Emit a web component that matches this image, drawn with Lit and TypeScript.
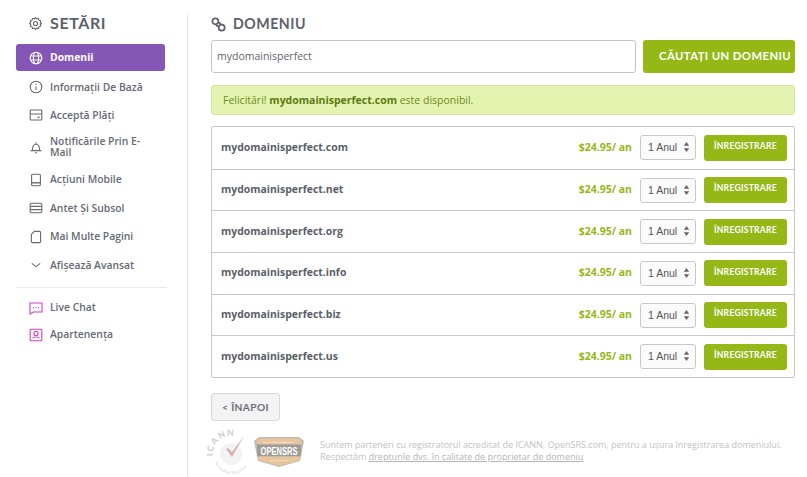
import { LitElement, html, css, svg } from "lit";
import { customElement } from "lit/decorators.js";

const ic = (body: unknown, cls = "") => html`<svg class="ic ${cls}" viewBox="0 0 14 14" width="14" height="14" fill="none" stroke="currentColor" stroke-width="1.1">${body}</svg>`;

const icons = {
  globe: svg`<circle cx="7" cy="7" r="5.8"/><ellipse cx="7" cy="7" rx="2.6" ry="5.8"/><path d="M1.4 5h11.2M1.4 9h11.2"/>`,
  info: svg`<circle cx="7" cy="7" r="5.8"/><path d="M7 6.2v4M7 3.8v1.2"/>`,
  card: svg`<rect x="1.2" y="2" width="11.6" height="10" rx=".8"/><path d="M1.2 6h11.6M8.6 9.4h2"/>`,
  bell: svg`<path d="M1.6 10.6h10.8M3.4 10.6c0-4.6.8-6.4 3.6-6.4s3.6 1.8 3.6 6.4M7 2.400v1.800M6 12.800h2"/>`,
  mobile: svg`<rect x="2.6" y="1.2" width="8.8" height="11.6" rx="1.2"/><path d="M2.6 9.8h8.8" stroke-width="1.4"/>`,
  header: svg`<rect x="1.2" y="2.2" width="11.6" height="9.6" rx="1.2"/><path d="M1.2 5.4h11.6M1.2 8.6h11.6"/>`,
  page: svg`<path d="M5.4 1.4h5.2a1 1 0 0 1 1 1v9.2a1 1 0 0 1-1 1H3.4a1 1 0 0 1-1-1V4.4z"/>`,
  chev: svg`<path d="M2.8 5.4 7 8.6l4.2-3.2"/>`,
  chat: svg`<path d="M1 2h12v9H4.4L1 13zM4 6.6h1M6.5 6.6h1M9 6.6h1"/>`,
  user: svg`<rect x="1.2" y="1.2" width="11.6" height="11.6" rx=".8"/><circle cx="7" cy="5.4" r="2.1"/><path d="M3.6 10.4c.6-1.8 6.2-1.8 6.8 0"/>`,
  gear: svg`<circle cx="7" cy="7" r="2.2"/><path d="M7 .6l1.3 1.5 1.9-.5.6 1.8 1.800.6-.5 1.900L13.400 7l-1.300 1.100.5 1.900-1.800.6-.6 1.800-1.900-.5L7 13.400l-1.300-1.500-1.900.5-.6-1.800-1.800-.6.5-1.900L.6 7l1.300-1.100-.5-1.900 1.800-.6.6-1.800 1.900.5z"/>`,
};

const nav: [keyof typeof icons, string][] = [
  ["info", "Informații De Bază"],
  ["card", "Acceptă Plăți"],
  ["bell", "Notificările Prin E-Mail"],
  ["mobile", "Acțiuni Mobile"],
  ["header", "Antet Și Subsol"],
  ["page", "Mai Multe Pagini"],
  ["chev", "Afișează Avansat"],
];

const tlds = ["com", "net", "org", "info", "biz", "us"];

@customElement("app-root")
export class AppRoot extends LitElement {
  static styles = css`
    :host { display: block; width: 807px; height: 477px; overflow: hidden; background: #fff; font-family: "Open Sans", sans-serif; color: #5a5f69; }
    * { box-sizing: border-box; }
    .page { display: flex; height: 477px; padding: 15px 12px 0 16px; }
    .side { width: 172px; border-right: 1px solid #e3e3e3; padding-right: 22px; flex: none; }
    .side h2 { margin: -2px 0 11px; height: 20px; display: flex; align-items: center; gap: 8px; padding-left: 13px; font: 700 16px/20px Lato, sans-serif; letter-spacing: .6px; color: #5c616b; }
    .ic { flex: none; display: block; }
    .item { display: flex; align-items: center; gap: 7px; padding: 0 13px; height: 28px; font-size: 10.35px; font-weight: 600; line-height: 11px; color: #666a75; }
    .item.active { background: #8457b6; color: #fff; border-radius: 3px; height: 27px; margin-bottom: 2px; font-weight: 700; }
    .item.tall { height: 36px; }
    .item.low { height: 29px; }
    .item .pink { color: #d63fc4; }
    .item.plain { height: 27px; }
    hr { border: 0; border-top: 1px solid #e9e9e9; margin: 8px 0 6px; width: 151px; }
    .main { margin-left: 23px; width: 584px; flex: none; }
    .main h2 { margin: 0 0 7px; height: 18px; display: flex; align-items: center; gap: 7px; font: 700 14.2px/18px Lato, sans-serif; letter-spacing: .5px; color: #5c616b; }
    .search { display: flex; gap: 7px; height: 33px; }
    .input { flex: 1; border: 1px solid #c6c6ca; border-radius: 3px; display: flex; align-items: center; padding: 0 5px 1px; font-size: 10.5px; color: #5f6470; background: #fff; }
    .go { width: 152px; border: 0; background: #95b817; border-radius: 3px; color: #fff; font: 700 11.3px/1 Lato, sans-serif; letter-spacing: .42px; padding: 0 0 2px 16px; text-align: left; white-space: nowrap; }
    .alert { margin-top: 12px; height: 30px; background: #e4f3b0; border: 1px solid #d5e4a4; border-radius: 3px; padding: 0 11px; display: flex; align-items: center; font-size: 10.5px; color: #6c8a1c; white-space: pre; }
    .alert b { color: #5d7a10; font-weight: 700; }
    .list { margin-top: 11px; border: 1px solid #c9c9cd; border-radius: 2px; }
    .row { height: 41.7px; display: flex; align-items: center; padding: 0 7px 0 9px; border-top: 1px solid #c9c9cd; }
    .row:first-child { border-top: 0; }
    .name { flex: 1; font-size: 10.45px; font-weight: 700; color: #5a5f69; margin-bottom: 2px; }
    .price { font-size: 10.5px; font-weight: 700; color: #95b817; margin-right: 8px; margin-bottom: 2px; }
    .sel { width: 56px; height: 25px; border: 1px solid #c9c9cd; border-radius: 3px; background: #fbfbfc; display: flex; align-items: center; justify-content: space-between; padding: 0 5px 1px 7px; font: 10.5px "Liberation Sans", sans-serif; color: #555; margin-right: 8px; }
    .sel svg { display: block; }
    .reg { width: 83px; height: 26px; border: 0; background: #95b817; border-radius: 3px; color: #fff; font: 700 8.6px/1 Lato, sans-serif; letter-spacing: .25px; padding: 0 0 3px; }
    .back { display: block; margin-top: 15px; width: 69px; height: 28px; border: 1px solid #d8d8da; border-radius: 3px; background: #f3f3f4; color: #6a6e76; font: 700 10.2px/1 Lato, sans-serif; letter-spacing: .4px; padding: 0 0 1px; }
    .foot { display: flex; align-items: flex-start; margin-top: 11px; }
    .logos { display: flex; gap: 6px; width: 109px; flex: none; align-items: center; opacity: .85; }
    .logos svg { overflow: visible; flex: none; display: block; }
    .legal { font-size: 9px; line-height: 12px; color: #c2c2c4; margin-top: 7px; white-space: nowrap; }
    .legal u { text-underline-offset: 1px; color: #b5b5b8; }
    .lt { font: 700 8.5px Lato, sans-serif; fill: #bfc4c9; letter-spacing: 1.5px; }
    .lt2 { font: 400 4px Lato, sans-serif; fill: #c4c8cd; letter-spacing: .2px; }
    .os { font: 700 11px "Liberation Sans", sans-serif; fill: #fff; }
    .tiny { font: 700 2.6px Lato, sans-serif; fill: #fff; letter-spacing: .3px; }
  `;

  render() {
    return html`<div class="page">
      <aside class="side">
        <h2><svg class="ic" viewBox="0 0 14 14" width="13" height="13" fill="none" stroke="currentColor" stroke-width="1.1">${icons.gear}</svg>SETĂRI</h2>
        <div class="item active">${ic(icons.globe)}Domenii</div>
        ${nav.map(([i, t], n) => html`<div class="item ${n === 2 ? "tall" : ""} ${n === 3 || n === 5 ? "low" : ""}">${ic(icons[i])}<span>${t}</span></div>`)}
        <hr />
        <div class="item plain"><span class="pink">${ic(icons.chat)}</span>Live Chat</div>
        <div class="item plain"><span class="pink">${ic(icons.user)}</span>Apartenența</div>
      </aside>
      <main class="main">
        <h2><svg class="ic" viewBox="0 0 16 16" width="15" height="15" fill="none" stroke="currentColor" stroke-width="1.8"><circle cx="4.6" cy="4.6" r="3.2"/><circle cx="11.4" cy="11.4" r="3.2"/><path d="M5.8 8.4a3 3 0 0 0 1.8 1.8M8.4 5.8a3 3 0 0 1 1.8 1.8"/></svg>DOMENIU</h2>
        <div class="search">
          <div class="input">mydomainisperfect</div>
          <button class="go">CĂUTAȚI UN DOMENIU</button>
        </div>
        <div class="alert">Felicitări! <b>mydomainisperfect.com</b> este disponibil.</div>
        <div class="list">
          ${tlds.map((t) => html`<div class="row">
            <span class="name">mydomainisperfect.${t}</span>
            <span class="price">$24.95/ an</span>
            <div class="sel">1 Anul<svg width="7" height="12" viewBox="0 0 7 12" fill="#666"><path d="M3.5 1 6.2 4.8H.8zM3.5 11 .8 7.2h5.4z"/></svg></div>
            <button class="reg">ÎNREGISTRARE</button>
          </div>`)}
        </div>
        <button class="back">&lt; ÎNAPOI</button>
        <div class="foot">
          <div class="logos">
            <svg width="37" height="40" viewBox="0 0 37 40" fill="none">
              <defs>
                <path id="arcTop" d="M2 24A18 18 0 0 1 35 12"/>
                <path id="arcBot" d="M4 30A18 18 0 0 0 38 18"/>
              </defs>
              <circle cx="20" cy="22" r="11" fill="#f0f1f3"/>
              <path d="M15 17l2-1 4 4L33 4 21 25z" fill="#d3a5a3"/>
              <text class="lt"><textPath href="#arcTop">ICANN</textPath></text>
              <text class="lt2"><textPath href="#arcBot">Accredited Registrar</textPath></text>
            </svg>
            <svg width="50" height="30" viewBox="0 0 50 30">
              <path d="M5 0h40l5 4-4 20-21 6-21-6L0 4z" fill="#b9b2a8"/>
              <path d="M6 1.500h38l3.500 3-.6 3H3.100l-.6-3z" fill="#e4bb8b"/>
              <rect x="3" y="7.500" width="44" height="12" fill="#8f8b86"/>
              <path d="M4 19.500h42l-1 4-20 5-20-5z" fill="#e4bb8b"/>
              <text class="tiny" x="25" y="6" text-anchor="middle">MANAGED PROPERLY</text>
              <text class="tiny" x="25" y="23.500" text-anchor="middle">SINCE 1999</text>
              <text class="os" x="25" y="17.500" text-anchor="middle" textLength="37" lengthAdjust="spacingAndGlyphs">OPENSRS</text>
            </svg>
          </div>
          <div class="legal">Suntem parteneri cu registratorul acreditat de ICANN, OpenSRS.com, pentru a ușura înregistrarea domeniului.<br />Respectăm <u>drepturile dvs. în calitate de proprietar de domeniu</u></div>
        </div>
      </main>
    </div>`;
  }
}
